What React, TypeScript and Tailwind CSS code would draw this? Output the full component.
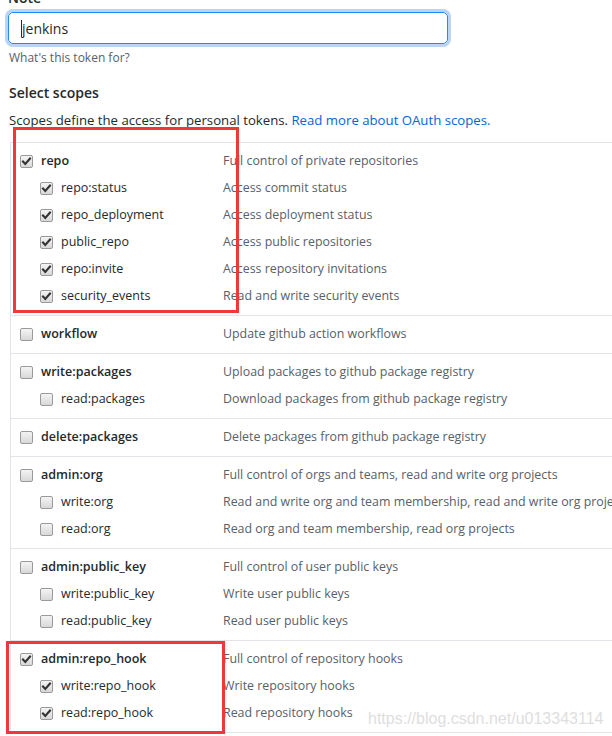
import React from "react";

type Scope = { name: string; desc: string; checked: boolean; child?: boolean };

const groups: Scope[][] = [
  [
    { name: "repo", desc: "Full control of private repositories", checked: true },
    { name: "repo:status", desc: "Access commit status", checked: true, child: true },
    { name: "repo_deployment", desc: "Access deployment status", checked: true, child: true },
    { name: "public_repo", desc: "Access public repositories", checked: true, child: true },
    { name: "repo:invite", desc: "Access repository invitations", checked: true, child: true },
    { name: "security_events", desc: "Read and write security events", checked: true, child: true },
  ],
  [{ name: "workflow", desc: "Update github action workflows", checked: false }],
  [
    { name: "write:packages", desc: "Upload packages to github package registry", checked: false },
    { name: "read:packages", desc: "Download packages from github package registry", checked: false, child: true },
  ],
  [{ name: "delete:packages", desc: "Delete packages from github package registry", checked: false }],
  [
    { name: "admin:org", desc: "Full control of orgs and teams, read and write org projects", checked: false },
    { name: "write:org", desc: "Read and write org and team membership, read and write org projects", checked: false, child: true },
    { name: "read:org", desc: "Read org and team membership, read org projects", checked: false, child: true },
  ],
  [
    { name: "admin:public_key", desc: "Full control of user public keys", checked: false },
    { name: "write:public_key", desc: "Write user public keys", checked: false, child: true },
    { name: "read:public_key", desc: "Read user public keys", checked: false, child: true },
  ],
  [
    { name: "admin:repo_hook", desc: "Full control of repository hooks", checked: true },
    { name: "write:repo_hook", desc: "Write repository hooks", checked: true, child: true },
    { name: "read:repo_hook", desc: "Read repository hooks", checked: true, child: true },
  ],
];

function Check({ checked }: { checked: boolean }) {
  return (
    <div className="w-[13px] h-[13px] shrink-0 rounded-[2px] border border-[#9a9a9a] bg-gradient-to-b from-[#f4f4f4] to-[#d8d8d8] flex items-center justify-center">
      {checked && (
        <svg width="11" height="11" viewBox="0 0 11 11">
          <path d="M2 5.5 L4.3 8 L9 2.6" fill="none" stroke="#333" strokeWidth="2.1" strokeLinecap="square" />
        </svg>
      )}
    </div>
  );
}

export default function App() {
  return (
    <div className="relative w-[612px] h-[736px] overflow-hidden bg-white font-['Open_Sans',sans-serif] text-[#24292e]">
      <div className="pl-[8px]">
        <div className="h-[20px] -mt-[12px] text-[14px] font-semibold leading-[20px]">Note</div>
        <div className="mt-[4px] h-[32px] w-[440px] rounded-[5px] border border-[#2188ff] shadow-[0_0_0_3px_rgba(3,102,214,0.28)] pl-[13px] flex items-center text-[14px]">
          <span className="relative">
            <span className="absolute -left-[1px] top-[2px] w-[1px] h-[17px] bg-[#24292e]" />
            jenkins
          </span>
        </div>
        <div className="mt-[5px] h-[18px] leading-[18px] text-[12px] text-[#586069] pl-[1px]">What's this token for?</div>
        <div className="mt-[16px] h-[20px] leading-[20px] text-[14px] font-semibold pl-[1px]">Select scopes</div>
        <div className="mt-[7px] h-[20px] leading-[20px] text-[13.2px] pl-[1px] whitespace-nowrap">
          Scopes define the access for personal tokens.{" "}
          <span className="text-[#0366d6]">Read more about OAuth scopes.</span>
        </div>
        <div className="mt-[12px] ml-[2px] w-[650px] border-l border-t border-[#e1e4e8]">
          {groups.map((g, gi) => (
            <div key={gi} className="border-b border-[#e1e4e8] py-[5px]">
              {g.map((s) => (
                <div key={s.name} className="h-[27px] flex items-center whitespace-nowrap">
                  <div className={`w-[212px] shrink-0 flex items-center gap-[8px] ${s.child ? "pl-[29px]" : "pl-[9px]"}`}>
                    <Check checked={s.checked} />
                    <span className={`text-[12.5px] ${s.child ? "" : "font-semibold"}`}>{s.name}</span>
                  </div>
                  <div className="text-[12.4px] text-[#586069]">{s.desc}</div>
                </div>
              ))}
            </div>
          ))}
        </div>
      </div>

      <div className="absolute left-[13px] top-[127px] w-[226px] h-[186px] border-[3px] border-[#f03838] pointer-events-none" />
      <div className="absolute left-[6px] top-[641px] w-[219px] h-[93px] border-[3px] border-[#f03838] pointer-events-none" />
      <div className="absolute left-[368px] top-[707px] text-[16px] font-['Liberation_Sans',sans-serif] text-[#dedede] whitespace-nowrap">
        https://blog.csdn.net/u013343114
      </div>
    </div>
  );
}
